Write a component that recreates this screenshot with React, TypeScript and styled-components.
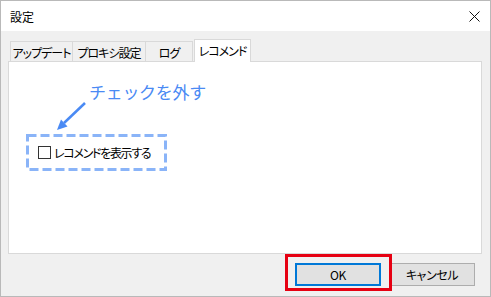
import React from 'react';
import styled, { createGlobalStyle } from 'styled-components';

const Global = createGlobalStyle`
    html, body {
        margin: 0;
        padding: 0;
        background: #fff;
    }
    body {
        font-family: "Noto Sans CJK JP", "Noto Sans", sans-serif;
        font-feature-settings: "palt";
        color: #000;
    }
`;

const Window = styled.div`
    width: 491px;
    height: 297px;
    box-sizing: border-box;
    border: 1px solid #b9b9b9;
    background: #f0f0f0;
    display: flex;
    flex-direction: column;
`;
const TitleBar = styled.div`
    height: 30px;
    background: #fff;
    display: flex;
    align-items: center;
    justify-content: space-between;
    padding: 0 10px 0 9px;
    font-size: 12px;
`;
const Body = styled.div`
    flex: 1;
    padding: 8px 8px 0 7px;
    display: flex;
    flex-direction: column;
`;
const TabStrip = styled.div`
    display: flex;
    align-items: flex-end;
    height: 22px;
    padding-left: 2px;
`;
const Tab = styled.div<{ $w: number; $active?: boolean }>`
    box-sizing: border-box;
    flex: none;
    width: ${(p) => p.$w}px;
    height: ${(p) => (p.$active ? 23 : 20)}px;
    margin-right: ${(p) => (p.$active ? 0 : -1)}px;
    margin-left: ${(p) => (p.$active ? 2 : 0)}px;
    margin-bottom: ${(p) => (p.$active ? -1 : 0)}px;
    border: 1px solid #d9d9d9;
    border-bottom: none;
    background: ${(p) => (p.$active ? '#fff' : '#f0f0f0')};
    position: relative;
    z-index: ${(p) => (p.$active ? 1 : 0)};
    display: flex;
    align-items: center;
    justify-content: center;
    white-space: nowrap;
    font-size: 12px;
    letter-spacing: -1px;
    padding-top: 1px;
    padding-bottom: ${(p) => (p.$active ? 2 : 0)}px;
`;
const Panel = styled.div`
    height: 193px;
    box-sizing: border-box;
    background: #fff;
    border: 1px solid #d9d9d9;
    position: relative;
`;
const Note = styled.div`
    margin: 20px 0 0 80px;
    font-size: 17px;
    line-height: 20px;
    font-feature-settings: normal;
    letter-spacing: -0.3px;
    color: #4a8af4;
`;
const Arrow = styled.svg`
    position: absolute;
    left: 44px;
    top: 38px;
`;
const CheckBox = styled.div`
    position: relative;
    box-sizing: border-box;
    width: 141px;
    height: 37px;
    margin: 32px 0 0 17px;
    padding-left: 12px;
    display: flex;
    align-items: center;
    white-space: nowrap;
    font-size: 12px;
    letter-spacing: -1.3px;
`;
const Dashes = styled.svg`
    position: absolute;
    left: 0;
    top: 0;
`;
const Square = styled.span`
    box-sizing: border-box;
    flex: none;
    width: 13px;
    height: 13px;
    border: 1px solid #333;
    background: #fff;
    margin-right: 3px;
`;
const Footer = styled.div`
    flex: 1;
    display: flex;
    justify-content: flex-end;
    align-items: flex-start;
    gap: 8px;
    padding: 9px 7px 0 0;
`;
const Button = styled.div<{ $primary?: boolean }>`
    box-sizing: border-box;
    flex: none;
    width: 86px;
    height: 23px;
    background: #e1e1e1;
    border: ${(p) => (p.$primary ? '2px solid #0078d7' : '1px solid #adadad')};
    display: flex;
    align-items: center;
    justify-content: center;
    font-size: 12px;
    letter-spacing: -0.4px;
`;
const Highlight = styled.div`
    position: relative;
    flex: none;
    &::after {
        content: '';
        position: absolute;
        top: -9px;
        bottom: -5px;
        left: -10px;
        right: -11px;
        border: 3px solid #e60012;
    }
`;

export default function App() {
    return (
        <>
            <Global />
            <Window>
                <TitleBar>
                    <span>設定</span>
                    <svg width="11" height="11" viewBox="0 0 11 11">
                        <path d="M0.5 0.5L10.5 10.5M10.5 0.5L0.5 10.5" stroke="#111" strokeWidth="1" />
                    </svg>
                </TitleBar>
                <Body>
                    <TabStrip>
                        <Tab $w={63}>アップデート</Tab>
                        <Tab $w={74}>プロキシ設定</Tab>
                        <Tab $w={48}>ログ</Tab>
                        <Tab $w={57} $active>
                            レコメンド
                        </Tab>
                    </TabStrip>
                    <Panel>
                        <Note>チェックを外す</Note>
                        <Arrow width="36" height="34" viewBox="0 0 36 34">
                            <line x1="32" y1="3" x2="11" y2="23" stroke="#4a8af4" strokeWidth="2.5" />
                            <polygon points="4,30 14.5,26.5 8,19.5" fill="#4a8af4" />
                        </Arrow>
                        <CheckBox>
                            <Dashes width="141" height="37">
                                <rect
                                    x="1.5"
                                    y="1.5"
                                    width="138"
                                    height="34"
                                    fill="none"
                                    stroke="#8ab4f8"
                                    strokeWidth="3"
                                    strokeDasharray="9 4"
                                />
                            </Dashes>
                            <Square />
                            レコメンドを表示する
                        </CheckBox>
                    </Panel>
                    <Footer>
                        <Highlight>
                            <Button $primary>OK</Button>
                        </Highlight>
                        <Button>キャンセル</Button>
                    </Footer>
                </Body>
            </Window>
        </>
    );
}
